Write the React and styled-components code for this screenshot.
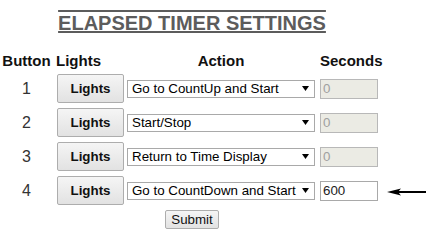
import React from "react";
import styled, { createGlobalStyle } from "styled-components";

const ACTIONS = [
    "Go to CountUp and Start",
    "Go to CountDown and Start",
    "Start/Stop",
    "Return to Time Display",
];

const rows = [
    { id: 1, action: "Go to CountUp and Start", seconds: "0", enabled: false },
    { id: 2, action: "Start/Stop", seconds: "0", enabled: false },
    { id: 3, action: "Return to Time Display", seconds: "0", enabled: false },
    { id: 4, action: "Go to CountDown and Start", seconds: "600", enabled: true },
];

export default function App() {
    return (
        <>
            <GlobalStyle />
            <Page>
                <Title>ELAPSED TIMER SETTINGS</Title>
                <Form onSubmit={(e) => e.preventDefault()}>
                    <HeadCell $col={1} $align="center">Button</HeadCell>
                    <HeadCell $col={2} $align="start" $offset={3}>Lights</HeadCell>
                    <HeadCell $col={3} $align="start" $width={188}>Action</HeadCell>
                    <HeadCell $col={4} $align="start">Seconds</HeadCell>

                    {rows.map((row) => (
                        <React.Fragment key={row.id}>
                            <Num>{row.id}</Num>
                            <LightsButton type="button">Lights</LightsButton>
                            <SelectBox>
                                <Select defaultValue={row.action}>
                                    {ACTIONS.map((a) => (
                                        <option key={a} value={a}>{a}</option>
                                    ))}
                                </Select>
                                <svg width="7" height="5" viewBox="0 0 7 5">
                                    <polygon points="0,0 7,0 3.5,5" fill="#000" />
                                </svg>
                            </SelectBox>
                            <SecondsInput
                                type="text"
                                defaultValue={row.seconds}
                                disabled={!row.enabled}
                            />
                            {row.enabled && (
                                <Arrow width="39" height="10" viewBox="0 0 39 10">
                                    <polygon points="0,5 14,1.5 11,5 14,8.5" fill="#000" />
                                    <line x1="10" y1="5" x2="39" y2="5" stroke="#000" strokeWidth="2" />
                                </Arrow>
                            )}
                        </React.Fragment>
                    ))}

                    <SubmitRow>
                        <SubmitButton type="submit">Submit</SubmitButton>
                    </SubmitRow>
                </Form>
            </Page>
        </>
    );
}

// GLOBAL *******************************************************

const GlobalStyle = createGlobalStyle`
    body {
        margin: 0;
        background: #ffffff;
        font-family: "Liberation Sans", Arial, sans-serif;
    }
`;

const Page = styled.div`
    width: 428px;
    padding-top: 12px;
`;

// TITLE *******************************************************

const Title = styled.h1`
    width: 384px;
    margin: 0 0 17px 0;
    text-align: center;
    font-size: 20px;
    line-height: 23px;
    font-weight: bold;
    color: #5c5c5c;
    text-decoration: underline overline;
    text-decoration-thickness: 2px;
`;

// TABLE *******************************************************

const Form = styled.form`
    display: grid;
    grid-template-columns: 53px 74px 193px 64px 44px;
    grid-auto-rows: 29px;
    grid-template-rows: 17px;
    row-gap: 5px;
    align-items: center;
`;

const HeadCell = styled.div`
    grid-column: ${(p) => p.$col};
    grid-row: 1;
    justify-self: ${(p) => p.$align};
    margin-left: ${(p) => p.$offset || 0}px;
    width: ${(p) => (p.$width ? `${p.$width}px` : "auto")};
    text-align: center;
    font-size: 15px;
    line-height: 17px;
    font-weight: bold;
    color: #111;
`;

const Num = styled.div`
    grid-column: 1;
    justify-self: center;
    font-size: 16px;
    color: #333;
`;

const LightsButton = styled.button`
    grid-column: 2;
    margin-left: 4px;
    width: 67px;
    height: 29px;
    padding: 0;
    border: 1px solid #adadad;
    border-radius: 2px;
    background: linear-gradient(#f5f5f5, #e2e2e2);
    font-family: "Liberation Sans", Arial, sans-serif;
    font-size: 13.333px;
    font-weight: bold;
    color: #111;
`;

const SelectBox = styled.div`
    grid-column: 3;
    display: flex;
    align-items: center;
    gap: 3px;
    width: 188px;
    height: 18px;
    box-sizing: border-box;
    border: 1px solid #a9a9a9;
    padding: 0 5px 0 4px;
    background: #fff;
`;

const Select = styled.select`
    flex: 1;
    min-width: 0;
    appearance: none;
    border: none;
    outline: none;
    background: transparent;
    padding: 0;
    font-family: "Liberation Sans", Arial, sans-serif;
    font-size: 13.333px;
    line-height: 16px;
    color: #000;
`;

const SecondsInput = styled.input`
    grid-column: 4;
    width: 58px;
    height: 20px;
    box-sizing: border-box;
    border: 1px solid #a9a9a9;
    padding: 0 2px;
    font-family: "Liberation Sans", Arial, sans-serif;
    font-size: 13.333px;
    color: #222;
    background: #fff;

    &:disabled {
        background: #ebebe4;
        color: #a0a0a0;
        border-color: #b8b8b8;
    }
`;

const Arrow = styled.svg`
    grid-column: 5;
    margin-left: 3px;
    margin-top: 2px;
`;

// SUBMIT *******************************************************

const SubmitRow = styled.div`
    grid-column: 1 / 5;
    justify-self: center;
    align-self: start;
`;

const SubmitButton = styled.button`
    width: 54px;
    height: 19px;
    padding: 0;
    border: 1px solid #adadad;
    border-radius: 2px;
    background: linear-gradient(#f5f5f5, #e2e2e2);
    font-family: "Liberation Sans", Arial, sans-serif;
    font-size: 13.333px;
    color: #111;
`;
